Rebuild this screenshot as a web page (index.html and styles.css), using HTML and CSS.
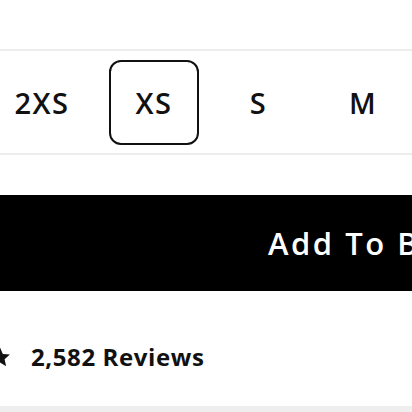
FILE: index.html
```html
<!DOCTYPE html>
<html lang="en">
<head>
<meta charset="utf-8">
<title>Product options</title>
<link rel="stylesheet" href="styles.css">
</head>
<body>
  <main class="product">
    <section class="sizes">
      <div class="size">2XS</div>
      <div class="size size--active">XS</div>
      <div class="size">S</div>
      <div class="size">M</div>
    </section>

    <button class="add-to-bag" type="button">Add To Bag</button>

    <section class="reviews">
      <svg class="star" viewBox="0 0 24 24" aria-hidden="true">
        <path d="M12 1.5l3.1 7.1 7.7.7-5.8 5.1 1.7 7.6L12 18l-6.7 4 1.7-7.6-5.8-5.1 7.7-.7z"/>
      </svg>
      <span class="reviews-count">2,582 Reviews</span>
    </section>

    <div class="divider"></div>
  </main>
</body>
</html>
```

FILE: styles.css
```css
html, body {
  margin: 0;
  padding: 0;
  background: #fff;
}

body {
  width: 412px;
  height: 412px;
  overflow: hidden;
  font-family: "Open Sans", "DejaVu Sans", sans-serif;
  color: #111;
}

.product {
  display: flex;
  flex-direction: column;
  padding-top: 49px;
}

/* size selector */
.sizes {
  display: flex;
  align-items: center;
  gap: 14.5px;
  padding: 9px 0 8px;
  border-top: 2px solid #ececec;
  border-bottom: 2px solid #ececec;
}

.size {
  flex: 0 0 90px;
  height: 85px;
  box-sizing: border-box;
  display: flex;
  align-items: center;
  justify-content: center;
  font-size: 29px;
  font-weight: 600;
  letter-spacing: 1.5px;
  border: 2px solid transparent;
  border-radius: 12px;
}

.size:first-child {
  flex-basis: 84px;
  margin-right: 10.5px;
}

.size--active {
  border-color: #111;
}

/* primary action */
.add-to-bag {
  margin-top: 40px;
  width: 700px;
  height: 96px;
  border: 0;
  background: #000;
  color: #fff;
  font-family: inherit;
  font-size: 31px;
  font-weight: 600;
  letter-spacing: 2.5px;
  text-align: left;
  padding: 0 0 0 268px;
  flex-shrink: 0;
}

/* rating */
.reviews {
  height: 115px;
  box-sizing: border-box;
  padding-top: 16px;
  display: flex;
  align-items: center;
  gap: 20px;
}

.star {
  width: 22px;
  height: 22px;
  margin-left: -11px;
  fill: #111;
}

.reviews-count {
  font-size: 24px;
  font-weight: 700;
  letter-spacing: 0.6px;
}

.divider {
  height: 10px;
  background: #eeeeee;
}
```
